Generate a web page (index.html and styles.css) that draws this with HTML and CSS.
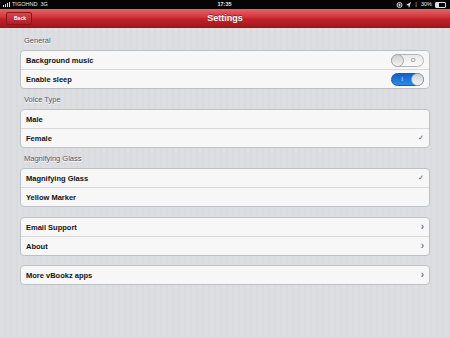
FILE: index.html
```html
<!DOCTYPE html>
<html lang="en">
<head>
<meta charset="UTF-8">
<meta name="viewport" content="width=device-width, initial-scale=1.0">
<title>Settings</title>
<link rel="stylesheet" href="styles.css">
</head>
<body>

<div class="status-bar">
    <span class="carrier"><span class="signal"><i></i><i></i><i></i><i></i></span> TIGOHND &nbsp;3G</span>
    <span class="clock">17:35</span>
    <span class="status-right">
        <svg width="7" height="6" viewBox="0 0 7 6"><circle cx="3.5" cy="3" r="2.5" fill="none" stroke="#ddd" stroke-width="1"/><path d="M2 3h3M3.5 1.5v3" stroke="#ddd" stroke-width="0.8"/></svg>
        <svg width="5" height="6" viewBox="0 0 5 6"><path d="M0 3l5-3-2 6-0.6-2.4z" fill="#ddd"/></svg>
        <span class="bt">&#x2758;</span>
        30%
        <span class="battery"><span class="battery-fill"></span></span>
    </span>
</div>

<div class="nav-bar">
    <span class="back-btn">Back</span>
    <span class="nav-title">Settings</span>
</div>

<div class="content">
    <div class="section-title first">General</div>
    <div class="card">
        <div class="row">
            <span>Background music</span>
            <span class="switch off"><span class="knob"></span><span class="switch-label">O</span></span>
        </div>
        <div class="row">
            <span>Enable sleep</span>
            <span class="switch on"><span class="switch-label">I</span><span class="knob"></span></span>
        </div>
    </div>

    <div class="section-title">Voice Type</div>
    <div class="card">
        <div class="row"><span>Male</span></div>
        <div class="row"><span>Female</span><span class="check">&#10003;</span></div>
    </div>

    <div class="section-title">Magnifying Glass</div>
    <div class="card">
        <div class="row"><span>Magnifying Glass</span><span class="check">&#10003;</span></div>
        <div class="row"><span>Yellow Marker</span></div>
    </div>

    <div class="card spaced">
        <div class="row"><span>Email Support</span><span class="chevron">&#8250;</span></div>
        <div class="row"><span>About</span><span class="chevron">&#8250;</span></div>
    </div>

    <div class="card spaced last">
        <div class="row"><span>More vBookz apps</span><span class="chevron">&#8250;</span></div>
    </div>
</div>

</body>
</html>
```

FILE: styles.css
```css
body {
    font-family: "Liberation Sans", Arial, sans-serif;
    margin: 0;
    padding: 0;
    width: 450px;
    height: 338px;
    overflow: hidden;
    background-color: #dcdde1;
    background-image: repeating-linear-gradient(90deg, #dddee2 0, #dddee2 4px, #dadbdf 4px, #dadbdf 6px);
}
.status-bar {
    height: 9px;
    background-color: #050505;
    color: #e8e8e8;
    font-size: 5.5px;
    line-height: 9px;
    display: flex;
    justify-content: space-between;
    align-items: center;
    padding: 0 4px 0 3px;
}
.carrier {
    display: flex;
    align-items: center;
    gap: 2px;
    width: 120px;
}
.signal {
    display: flex;
    align-items: flex-end;
    gap: 1px;
    height: 5px;
}
.signal i {
    display: block;
    width: 1px;
    background-color: #ddd;
}
.signal i:nth-child(1) { height: 2px; }
.signal i:nth-child(2) { height: 3px; }
.signal i:nth-child(3) { height: 4px; }
.signal i:nth-child(4) { height: 5px; }
.clock {
    font-weight: bold;
}
.status-right {
    width: 120px;
    display: flex;
    justify-content: flex-end;
    align-items: center;
    gap: 3px;
}
.bt {
    font-size: 5px;
}
.battery {
    width: 9px;
    height: 4px;
    border: 1px solid #ddd;
    border-radius: 1px;
    display: flex;
}
.battery-fill {
    width: 3px;
    background-color: #ddd;
}
.nav-bar {
    height: 18px;
    background: linear-gradient(#e5646a, #d3343b 45%, #c0222a 55%, #a8151c);
    border-bottom: 1px solid #8a1a1e;
    display: flex;
    align-items: center;
    justify-content: center;
    position: relative;
}
.back-btn {
    position: absolute;
    left: 6px;
    top: 3px;
    height: 11px;
    padding: 0 5px 0 7px;
    background: linear-gradient(#d24a50, #b01c23);
    border: 1px solid #8c161b;
    border-radius: 2px;
    color: #fff;
    font-size: 5px;
    font-weight: bold;
    line-height: 11px;
}
.nav-title {
    color: #fff;
    font-size: 9px;
    font-weight: bold;
    text-shadow: 0 -1px 0 rgba(0, 0, 0, 0.4);
}
.content {
    padding: 0 20px;
}
.section-title {
    padding: 6px 4px 4px;
    line-height: 10px;
    font-size: 7.5px;
    color: #505768;
    text-shadow: 0 1px 0 #fff;
}
.section-title.first {
    padding-top: 8px;
}
.card {
    background-color: #f7f7f7;
    border: 1px solid #bfc0c4;
    border-radius: 4px;
}
.card.spaced {
    margin-top: 10px;
}
.card.last {
    margin-top: 9px;
}
.row {
    height: 18px;
    padding: 0 5px;
    display: flex;
    align-items: center;
    justify-content: space-between;
    font-size: 7.5px;
    font-weight: bold;
    color: #111;
}
.row + .row {
    border-top: 1px solid #d9d9d9;
}
.check {
    color: #4a5470;
    font-size: 7px;
    font-weight: normal;
}
.chevron {
    color: #777;
    font-size: 10px;
    font-weight: bold;
    line-height: 10px;
}
.switch {
    width: 31px;
    height: 11px;
    border: 1px solid #b5b5b8;
    border-radius: 7px;
    display: flex;
    align-items: center;
    justify-content: space-between;
    font-size: 6px;
    font-weight: normal;
}
.switch.off {
    background: linear-gradient(#e8e8e8, #fafafa);
    color: #777;
}
.switch.on {
    background: linear-gradient(#0f62c8, #2a8ae8);
    border-color: #1b5aa8;
    color: #dfe9ff;
}
.switch-label {
    flex: 1;
    text-align: center;
}
.knob {
    width: 11px;
    height: 11px;
    border-radius: 50%;
    background: linear-gradient(#cfcfcf, #f4f4f4);
    border: 1px solid #a9a9ad;
    margin: -1px;
}
```
